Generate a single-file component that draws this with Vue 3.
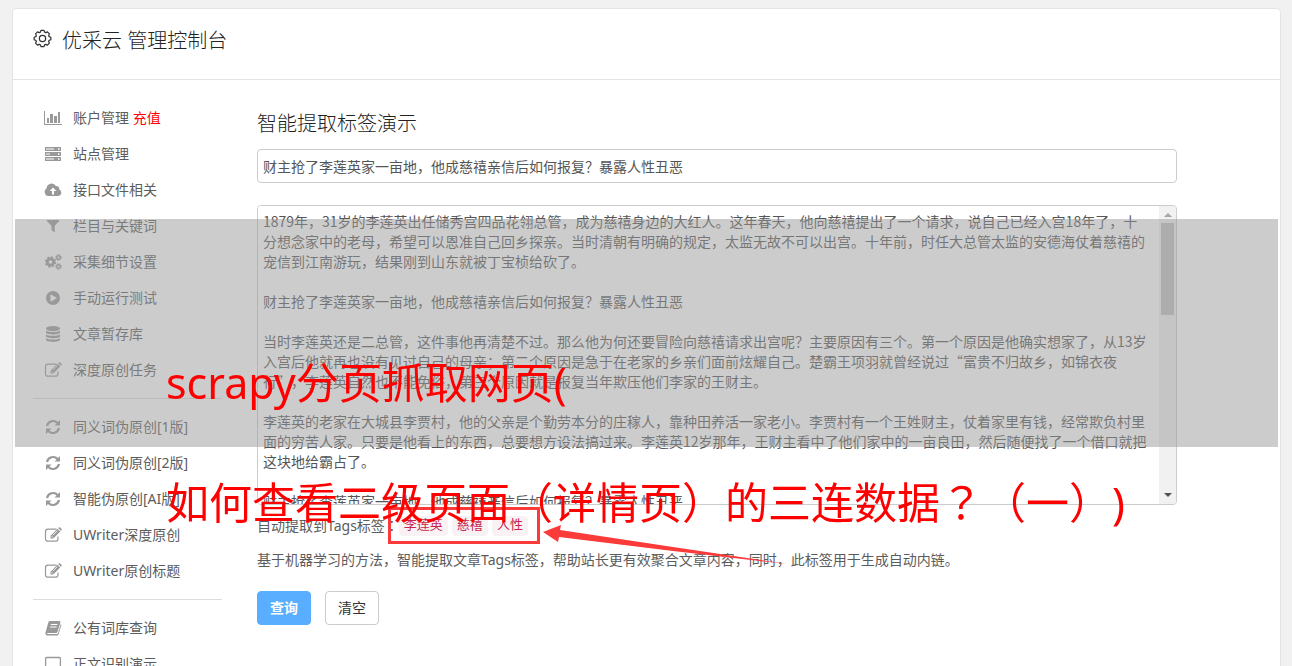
<script setup>
import { ref } from 'vue'

const groups = [
  [
    { icon: 'chart', label: '账户管理', extra: '充值' },
    { icon: 'server', label: '站点管理' },
    { icon: 'cloud', label: '接口文件相关' },
    { icon: 'filter', label: '栏目与关键词' },
    { icon: 'cogs', label: '采集细节设置' },
    { icon: 'play', label: '手动运行测试' },
    { icon: 'database', label: '文章暂存库' },
    { icon: 'edit', label: '深度原创任务' },
  ],
  [
    { icon: 'refresh', label: '同义词伪原创[1版]' },
    { icon: 'refresh', label: '同义词伪原创[2版]' },
    { icon: 'refresh', label: '智能伪原创[AI版]' },
    { icon: 'edit', label: 'UWriter深度原创' },
    { icon: 'edit', label: 'UWriter原创标题' },
  ],
  [
    { icon: 'book', label: '公有词库查询' },
    { icon: 'laptop', label: '正文识别演示' },
  ],
]

const tags = ['李莲英', '慈禧', '人性']
const title = ref('财主抢了李莲英家一亩地，他成慈禧亲信后如何报复？暴露人性丑恶')
const content = ref(`1879年，31岁的李莲英出任储秀宫四品花翎总管，成为慈禧身边的大红人。这年春天，他向慈禧提出了一个请求，说自己已经入宫18年了，十分想念家中的老母，希望可以恩准自己回乡探亲。当时清朝有明确的规定，太监无故不可以出宫。十年前，时任大总管太监的安德海仗着慈禧的宠信到江南游玩，结果刚到山东就被丁宝桢给砍了。

财主抢了李莲英家一亩地，他成慈禧亲信后如何报复？暴露人性丑恶

当时李莲英还是二总管，这件事他再清楚不过。那么他为何还要冒险向慈禧请求出宫呢？主要原因有三个。第一个原因是他确实想家了，从13岁入宫后他就再也没有见过自己的母亲；第二个原因是急于在老家的乡亲们面前炫耀自己。楚霸王项羽就曾经说过“富贵不归故乡，如锦衣夜行”，李莲英自然也不能免俗，第三个原因就是报复当年欺压他们李家的王财主。

李莲英的老家在大城县李贾村，他的父亲是个勤劳本分的庄稼人，靠种田养活一家老小。李贾村有一个王姓财主，仗着家里有钱，经常欺负村里面的穷苦人家。只要是他看上的东西，总要想方设法搞过来。李莲英12岁那年，王财主看中了他们家中的一亩良田，然后随便找了一个借口就把这块地给霸占了。

财主抢了李莲英家一亩地，他成慈禧亲信后如何报复？暴露人性丑恶`)

function clear() {
  title.value = ''
  content.value = ''
}
</script>

<template>
  <div class="page">
    <div class="card">
      <header class="head">
        <svg class="gear" viewBox="0 0 20 20" fill="none" stroke="#333" stroke-width="1.3" stroke-linejoin="round">
          <path d="M8.4 1.5h3.2l.6 1.8 1.3.5 1.7-.8 2.1 2.1-.8 1.7.5 1.3 1.8.6v2.6l-1.8.6-.5 1.3.8 1.7-2.1 2.1-1.7-.8-1.3.5-.6 1.8H8.4l-.6-1.8-1.3-.5-1.7.8-2.1-2.1.8-1.7-.5-1.3-1.8-.6V8.700l1.8-.6.5-1.300-.8-1.700L4.800 3l1.700.8 1.300-.5z" />
          <circle cx="10" cy="10" r="3.300" />
        </svg>
        <h1>优采云 管理控制台</h1>
      </header>
      <div class="body">
        <nav class="side">
          <ul v-for="(group, g) in groups" :key="g">
            <li v-for="item in group" :key="item.label">
              <a href="#">
                <svg class="icon" viewBox="0 0 18 16" fill="#999">
                  <template v-if="item.icon === 'chart'">
                    <path d="M0 1h1v13h17v1H0z" />
                    <path d="M3 8h2v5H3zM6 4h3v9H6zM10 6h3v7h-3zM14 2h2v11h-2z" />
                  </template>
                  <template v-else-if="item.icon === 'server'">
                    <path fill-rule="evenodd" d="M1 1h16v4H1zM2 2.500v1h8v-1zM14 2.200v1.500h1.500V2.200zM1 6h16v4H1zM2 7.500v1h4v-1zM14 7.200v1.500h1.500V7.200zM1 11h16v4H1zM2 12.500v1h8v-1zM14 12.200v1.500h1.500v-1.500z" />
                  </template>
                  <path v-else-if="item.icon === 'cloud'" fill-rule="evenodd" d="M4.500 14A4 4 0 0 1 2.600 6.600 5 5 0 0 1 12 4.200a2.700 2.700 0 0 1 3.300 3.300A3.400 3.400 0 0 1 14.500 14zM9 5.500L5.500 9H8v3.500h2V9h2.500z" />
                  <path v-else-if="item.icon === 'filter'" d="M2.500 2h13l-.5 1.200-4.300 4.500V14.500L7.500 12V7.700L3 3.200z" />
                  <template v-else-if="item.icon === 'cogs'">
                    <circle cx="6.500" cy="8" r="3.200" fill="none" stroke="#999" stroke-width="2.800" />
                    <circle cx="6.500" cy="8" r="4.900" fill="none" stroke="#999" stroke-width="1.600" stroke-dasharray="2 1.850" />
                    <circle cx="14.500" cy="3.500" r="1.800" fill="none" stroke="#999" stroke-width="1.400" />
                    <circle cx="14.500" cy="3.500" r="2.800" fill="none" stroke="#999" stroke-width="1" stroke-dasharray="1.300 .9" />
                    <circle cx="14.500" cy="12.500" r="1.800" fill="none" stroke="#999" stroke-width="1.400" />
                    <circle cx="14.500" cy="12.500" r="2.800" fill="none" stroke="#999" stroke-width="1" stroke-dasharray="1.300 .9" />
                  </template>
                  <path v-else-if="item.icon === 'play'" fill-rule="evenodd" d="M9 1a7 7 0 1 0 0 14A7 7 0 1 0 9 1zM6.500 4.200v7.600L13 8z" />
                  <template v-else-if="item.icon === 'database'">
                    <ellipse cx="9" cy="2.600" rx="7" ry="2.600" />
                    <path d="M2 4.500c2 2 12 2 14 0v2c0 2.600-14 2.600-14 0zM2 8.200c2 2 12 2 14 0v2c0 2.600-14 2.600-14 0zM2 12c2 2 12 2 14 0v1.500c0 3.200-14 3.200-14 0z" />
                  </template>
                  <template v-else-if="item.icon === 'edit'">
                    <path d="M12.500 2.200H4A2.500 2.500 0 0 0 1.500 4.700v7A2.500 2.500 0 0 0 4 14.200h7.500a2.500 2.500 0 0 0 2.500-2.500V9.500" fill="none" stroke="#999" stroke-width="1.200" />
                    <path d="M6.500 11.500V8.700l7-7 2.800 2.800-7 7zM14.200 1l.9-.7q.5-.3 1 .1l1.500 1.500q.4.500 0 1l-.7.800z" />
                    <path d="M7.500 9.200l1.400 1.400M8.800 8.200l4.500-4.500" stroke="#fff" stroke-width=".8" />
                  </template>
                  <template v-else-if="item.icon === 'refresh'">
                    <path d="M3 7a6.200 6.200 0 0 1 10.600-3M15 9a6.200 6.200 0 0 1-10.600 3" fill="none" stroke="#999" stroke-width="2.200" />
                    <path d="M16 1v5.500h-5.500zM2 15V9.500h5.500z" />
                  </template>
                  <template v-else-if="item.icon === 'book'">
                    <path fill-rule="evenodd" d="M6 1h9.500q1.200.2.900 1.400L13.500 12q-.3 1-1.400 1H3.500q-.8.600.2 1.100h9.200q.8 0 1.100-.8L16.800 4q.8.500.5 1.500l-2.700 8.700Q14.200 15.500 13 15.500H3.500Q1 15 1.500 12.500L4.300 2.400Q4.800 1 6 1zM7 4l-.3 1h6.500l.3-1zM6.300 6.500L6 7.500h6.500l.3-1z" />
                  </template>
                  <path v-else d="M1.600 2.500q0-1 1-1h12.800q1 0 1 1v9H1.600zM0 13.500h18" fill="none" stroke="#999" stroke-width="1.300" />
                </svg>
                <span>{{ item.label }} <em v-if="item.extra">{{ item.extra }}</em></span>
              </a>
            </li>
          </ul>
        </nav>
        <main class="main">
          <h2><label for="title">智能提取标签演示</label></h2>
          <input id="title" v-model="title" class="field" type="text">
          <div class="editor">
            <textarea v-model="content" aria-label="正文" spellcheck="false"></textarea>
            <div class="bar" aria-hidden="true">
              <i class="up"></i>
              <i class="thumb"></i>
              <i class="down"></i>
            </div>
          </div>
          <p class="result">
            <span>自动提取到Tags标签<span class="mark">：</span></span>
            <span class="tags">
              <code v-for="tag in tags" :key="tag">{{ tag }}</code>
              <svg class="arrow" viewBox="0 0 246 42" fill="#fb3a3a">
                <path d="M0 9L18 2 17 7 130 24 244 41 130 28 16 14 15 19z" />
              </svg>
            </span>
          </p>
          <p class="hint">基于机器学习的方法，智能提取文章Tags标签，帮助站长更有效聚合文章内容，同时，此标签用于生成自动内链。</p>
          <div class="actions">
            <button class="btn primary" type="button">查询</button>
            <button class="btn" type="button" @click="clear">清空</button>
          </div>
        </main>
      </div>
    </div>
    <div class="band"></div>
    <div class="caption">
      <p>scrapy分页抓取网页(</p>
      <p>如何查看二级页面（详情页）的三连数据<span class="mark">？</span>（一）)</p>
    </div>
  </div>
</template>

<style>
body {
  margin: 0;
  background: #f1f1f1;
}
</style>

<style scoped>
* {
  box-sizing: border-box;
}
.page {
  position: relative;
  height: 100vh;
  overflow: hidden;
  padding: 8px 11px 0 12px;
  font-family: "Noto Sans", "Noto Sans CJK SC", sans-serif;
  font-size: 14px;
  line-height: 20px;
  color: #5c5c5c;
  text-spacing-trim: space-all;
}
.card {
  background: #fff;
  border: 1px solid #e4e4e4;
  border-radius: 4px;
}
.head {
  display: flex;
  align-items: flex-start;
  gap: 10px;
  height: 71px;
  padding: 20px 20px 0;
  border-bottom: 1px solid #e4e4e4;
}
.gear {
  width: 19px;
  height: 19px;
}
h1, h2 {
  margin: 0;
  font-size: 20px;
  font-weight: 300;
  line-height: 24px;
  color: #222;
}
.body {
  display: flex;
  gap: 35px;
  padding: 20px 103px 0 20px;
}
.side {
  width: 189px;
  flex: none;
}
ul {
  list-style: none;
  margin: 0;
  padding: 0;
}
ul + ul {
  margin-top: 10px;
  padding-top: 10px;
  border-top: 1px solid #ddd;
}
li a {
  display: flex;
  align-items: center;
  gap: 11px;
  height: 36px;
  padding-left: 11px;
  color: #5c5c5c;
  text-decoration: none;
}
.icon {
  width: 18px;
  height: 16px;
}
em {
  font-style: normal;
  color: #f00;
}
.main {
  flex: 1;
  min-width: 0;
  padding-top: 12px;
}
.field {
  display: block;
  width: 100%;
  height: 34px;
  margin-top: 13px;
  padding: 6px 5px;
  border: 1px solid #ccc;
  border-radius: 4px;
  background: #fff;
  font: inherit;
  color: #555;
}
.editor {
  display: flex;
  height: 300px;
  margin-top: 22px;
  border: 1px solid #ccc;
  border-radius: 4px;
  overflow: hidden;
}
textarea {
  flex: 1;
  min-width: 0;
  padding: 5px 10px 5px 5px;
  border: 0;
  resize: none;
  background: #fff;
  font: inherit;
  font-family: "Noto Sans CJK SC", sans-serif;
  text-spacing-trim: space-all;
  color: #555;
  scrollbar-width: none;
}
.bar {
  display: flex;
  flex-direction: column;
  width: 17px;
  background: #f1f1f1;
}
.bar i {
  display: block;
}
.up, .down {
  align-self: center;
  border: 4px solid transparent;
}
.up {
  margin: 3px 0 6px;
  border-bottom-color: #a3a3a3;
}
.down {
  margin: auto 0 3px;
  border-top-color: #505050;
}
.thumb {
  height: 92px;
  margin: 0 2px;
  background: #c1c1c1;
}
p {
  margin: 0;
}
.result {
  display: flex;
  align-items: center;
  height: 20px;
  margin-top: 11px;
}
.tags {
  position: relative;
  display: flex;
  gap: 4px;
}
.tags::after {
  content: "";
  position: absolute;
  inset: -9px -12px -8px -11px;
  border: 3px solid #fb3a3a;
}
code {
  padding: 0 5px;
  border-radius: 4px;
  background: #f9f2f4;
  font-family: "Liberation Mono", "Noto Sans CJK SC", monospace;
  font-size: 13px;
  color: #c7254e;
}
.arrow {
  position: absolute;
  left: calc(100% + 15px);
  top: 7px;
  width: 246px;
  height: 42px;
}
.hint {
  margin-top: 14px;
}
.actions {
  display: flex;
  gap: 14px;
  margin-top: 21px;
}
.btn {
  min-width: 54px;
  height: 34px;
  padding: 0 11px;
  border: 1px solid #ccc;
  border-radius: 4px;
  background: #fff;
  font: inherit;
  color: #333;
}
.primary {
  border-color: #5aaeff;
  background: #5aaeff;
  font-weight: 600;
  color: #fff;
}
.band {
  position: absolute;
  top: 219px;
  left: 15px;
  right: 14px;
  height: 228px;
  background: rgba(153, 153, 153, 0.5);
}
.caption {
  position: absolute;
  top: 323px;
  left: 166px;
  font-size: 43px;
  line-height: 120px;
  white-space: nowrap;
  color: #f00;
  pointer-events: none;
}
.mark {
  font-family: "Noto Sans CJK TC", sans-serif;
  line-height: 1;
}
</style>
